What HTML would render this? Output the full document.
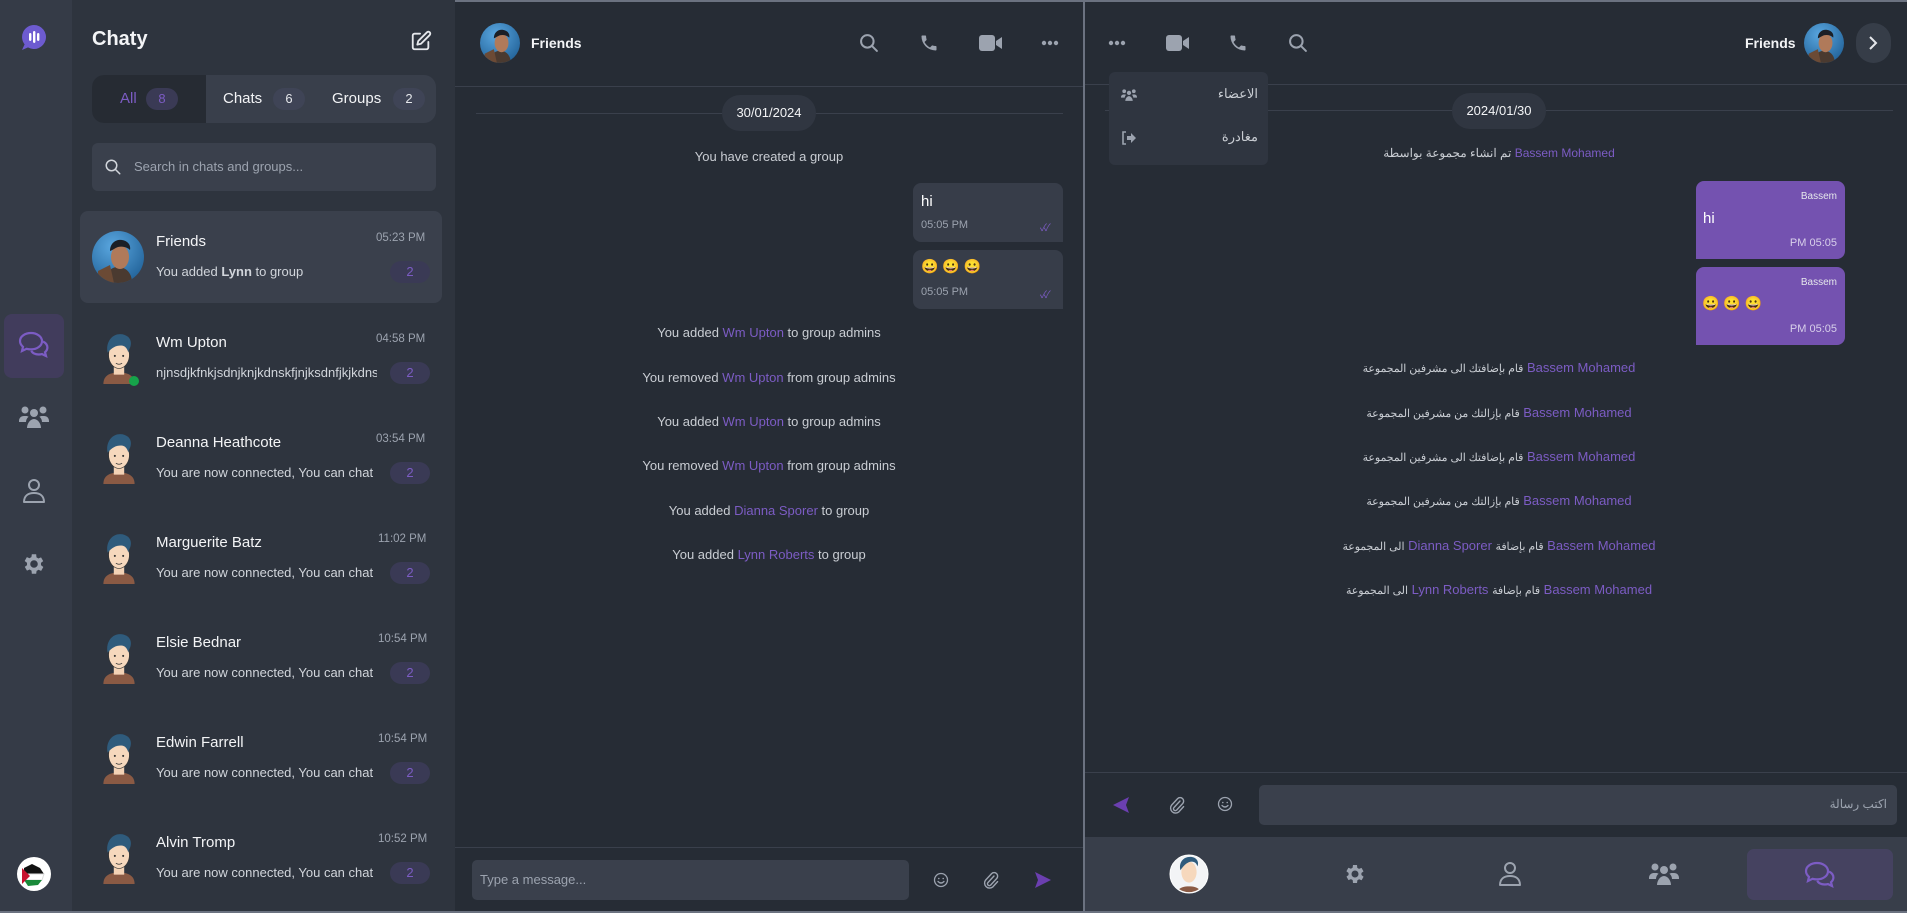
<!DOCTYPE html>
<html><head><meta charset="utf-8"><style>
*{box-sizing:border-box;margin:0;padding:0}
body{width:1907px;height:913px;overflow:hidden;background:#262c35;font-family:"Liberation Sans","Noto Sans CJK SC",sans-serif;color:#e5e7eb;position:relative}
.a{position:absolute}
.rail{left:0;top:0;width:72px;height:913px;background:#353b47}
.list{left:72px;top:0;width:383px;height:913px;background:#2e343e}
.topline{left:0;top:0;width:1907px;height:2px;background:#6b7280}
.ic{fill:none;stroke:#9ca3af;stroke-width:2;stroke-linecap:round;stroke-linejoin:round}
.name{font-size:15px;color:#f3f4f6;white-space:nowrap}
.prev{font-size:13px;color:#d1d5db;white-space:nowrap;overflow:hidden;width:221px}
.time{font-size:11.5px;color:#9ca3af}
.badge{width:40px;height:22px;border-radius:11px;background:#3a3a55;color:#7c5cc4;font-size:13px;text-align:center;line-height:22px}
.sys{font-size:13px;color:#c9cdd3;text-align:center;white-space:nowrap}
.sys span{color:#7c5cc4}
.pill{background:#303641;border-radius:18px;height:36px;line-height:36px;text-align:center;font-size:13px;color:#f3f4f6}
</style></head><body>
<div class="a topline"></div>
<div class="a rail"></div>
<div class="a list"></div>
<div class="a" style="left:1083px;top:0;width:2px;height:913px;background:#6b7280"></div>

<!-- rail -->
<svg class="a" style="left:20px;top:24px" width="28" height="28" viewBox="0 0 28 28"><path d="M14 1a12 12 0 1 1-6 22.4L2 26l2.6-5.6A12 12 0 0 1 14 1z" fill="#6d5bd0"/><rect x="9" y="9" width="2.4" height="8" rx="1.2" fill="#fff"/><rect x="13" y="7" width="2.4" height="12" rx="1.2" fill="#fff"/><rect x="17" y="9" width="2.4" height="8" rx="1.2" fill="#fff"/></svg>
<div class="a" style="left:4px;top:314px;width:60px;height:64px;border-radius:8px;background:#413c5c"></div>
<svg class="a" style="left:18px;top:330px" width="32" height="30" viewBox="0 0 32 30"><path d="M13 3C7 3 2 6.5 2 11c0 2.3 1.2 4.3 3 5.8L4 21l4.6-2.2c1.4.4 2.9.6 4.4.6 6 0 11-3.6 11-8.2S19 3 13 3z" fill="none" stroke="#7c5cc4" stroke-width="2.2"/><path d="M25 11.5c2.6 1.3 4.4 3.5 4.4 6 0 1.8-.9 3.4-2.4 4.7l1 3.8-4-1.9c-1 .3-2.1.4-3.2.4-3.3 0-6.2-1.4-7.6-3.6" fill="none" stroke="#7c5cc4" stroke-width="2.2"/></svg>
<svg class="a" style="left:19px;top:405px" width="30" height="24" viewBox="0 0 30 24"><g fill="#9ca3af"><circle cx="6" cy="5" r="3.5"/><circle cx="24" cy="5" r="3.5"/><circle cx="15" cy="8" r="4"/><path d="M0 16c0-3 2-5 5-5h2c1 0 2 .3 2.6.8C8 13 7 15 7 17H0z"/><path d="M30 16c0-3-2-5-5-5h-2c-1 0-2 .3-2.6.8C22 13 23 15 23 17h7z"/><path d="M8 23c0-4 3-9 7-9s7 5 7 9z"/></g></svg>
<svg class="a" style="left:22px;top:478px" width="24" height="26" viewBox="0 0 24 26"><circle cx="12" cy="7" r="5" class="ic"/><path d="M2 24c0-6 4-9 10-9s10 3 10 9z" class="ic"/></svg>
<svg class="a" style="left:21px;top:551px" width="26" height="26" viewBox="0 0 24 24"><path fill="#9ca3af" d="M19.4 13a7.5 7.5 0 0 0 0-2l2.1-1.6-2-3.5-2.5 1a7 7 0 0 0-1.7-1L15 3h-4l-.4 2.7a7 7 0 0 0-1.7 1l-2.5-1-2 3.5L6.6 11a7.5 7.5 0 0 0 0 2l-2.1 1.6 2 3.5 2.5-1a7 7 0 0 0 1.7 1L11 21h4l.4-2.7a7 7 0 0 0 1.7-1l2.5 1 2-3.5zM13 15.5a3.5 3.5 0 1 1 0-7 3.5 3.5 0 0 1 0 7z" transform="translate(-1 0)"/></svg>
<svg class="a" style="left:16px;top:856px" width="36" height="36" viewBox="0 0 36 36"><circle cx="18" cy="18" r="17" fill="#fff"/><path d="M8 12l8-4 8 4 4 6H8z" fill="#111"/><path d="M8 18h20l-2 6H8z" fill="#fff" stroke="#ddd"/><path d="M8 24h18l-4 5-10 1z" fill="#1a8a3a"/><path d="M6 12l8 8-8 8z" fill="#c8102e"/></svg>

<!-- list header -->
<div class="a" style="left:92px;top:28px;font-size:20px;font-weight:bold;color:#f3f4f6">Chaty</div>
<svg class="a" style="left:410px;top:30px" width="22" height="22" viewBox="0 0 24 24"><path class="ic" style="stroke:#e5e7eb" d="M11 4H5a2 2 0 0 0-2 2v13a2 2 0 0 0 2 2h13a2 2 0 0 0 2-2v-6"/><path style="stroke:#e5e7eb" class="ic" d="M18.5 2.5a2.1 2.1 0 0 1 3 3L12 15l-4 1 1-4z"/></svg>
<div class="a" style="left:92px;top:75px;width:344px;height:48px;border-radius:12px;background:#393f4b;overflow:hidden">
  <div class="a" style="left:0;top:0;width:114px;height:48px;background:#262b33"></div>
  <div class="a" style="left:28px;top:15px;font-size:15px;color:#7c5cc4">All</div>
  <div class="a" style="left:54px;top:13px;width:32px;height:22px;border-radius:11px;background:#3a3a55;color:#7c5cc4;font-size:13px;text-align:center;line-height:22px">8</div>
  <div class="a" style="left:131px;top:15px;font-size:15px;color:#f3f4f6">Chats</div>
  <div class="a" style="left:181px;top:13px;width:32px;height:22px;border-radius:11px;background:#3f4456;color:#e5e7eb;font-size:13px;text-align:center;line-height:22px">6</div>
  <div class="a" style="left:240px;top:15px;font-size:15px;color:#f3f4f6">Groups</div>
  <div class="a" style="left:301px;top:13px;width:32px;height:22px;border-radius:11px;background:#3f4456;color:#e5e7eb;font-size:13px;text-align:center;line-height:22px">2</div>
</div>
<div class="a" style="left:92px;top:143px;width:344px;height:48px;border-radius:6px;background:#3a404c"></div>
<svg class="a" style="left:104px;top:158px" width="18" height="18" viewBox="0 0 24 24"><circle cx="10" cy="10" r="7" class="ic" style="stroke:#d1d5db"/><path d="M15 15l6 6" class="ic" style="stroke:#d1d5db"/></svg>
<div class="a" style="left:134px;top:159px;font-size:13px;color:#9ca3af">Search in chats and groups...</div>

<!-- Friends item -->
<div class="a" style="left:80px;top:211px;width:362px;height:92px;border-radius:8px;background:#3a404c"></div>
<svg class="a" style="left:92px;top:231px" width="52" height="52" viewBox="0 0 52 52"><defs><radialGradient id="g1" cx="0.4" cy="0.3" r="0.8"><stop offset="0" stop-color="#5aa7e0"/><stop offset="1" stop-color="#1f5f95"/></radialGradient><clipPath id="c1"><circle cx="26" cy="26" r="26"/></clipPath></defs><g clip-path="url(#c1)"><rect width="52" height="52" fill="url(#g1)"/><path d="M14 52c0-10 4-16 12-16s14 6 14 16z" fill="#4a3a30"/><ellipse cx="28" cy="26" rx="9" ry="12" fill="#b07a5a"/><path d="M18 20c0-8 6-12 12-11s9 5 8 10c-3-3-8-4-12-3-3 1-5 3-8 4z" fill="#1b1f26"/><path d="M6 40l12-6 4 18H6z" fill="#6b4a35"/></g></svg>
<div class="a name" style="left:156px;top:233px">Friends</div>
<div class="a prev" style="left:156px;top:264px">You added <b>Lynn</b> to group</div>
<div class="a time" style="left:376px;top:232px">05:23 PM</div>
<div class="a badge" style="left:390px;top:261px">2</div>

<!-- other items -->
<div id="items"></div>
<script>
const people=[["Wm Upton","04:58 PM","njnsdjkfnkjsdnjknjkdnskfjnjksdnfjkjkdnsfj",1],["Deanna Heathcote","03:54 PM"],["Marguerite Batz","11:02 PM"],["Elsie Bednar","10:54 PM"],["Edwin Farrell","10:54 PM"],["Alvin Tromp","10:52 PM"]];
let h="";
people.forEach((p,i)=>{const t=312+100*i;
h+=`<svg class="a" style="left:97px;top:${t+20}px" width="44" height="52" viewBox="0 0 42 50"><path d="M6 50c0-8 6-11 15-11s15 3 15 11z" fill="#8a5a44"/><rect x="16" y="32" width="10" height="9" fill="#f3d2b5"/><ellipse cx="21" cy="22" rx="10" ry="13" fill="#f6d8bd" stroke="#333" stroke-width=".6"/><path d="M10 20c-2-10 4-18 12-18 7 0 12 5 10 12-1 3-2 4-2 6-1-4-3-7-7-7-5 0-9 2-13 7z" fill="#2f5b7c"/><circle cx="17" cy="23" r="1" fill="#333"/><circle cx="25" cy="23" r="1" fill="#333"/><path d="M18 30q3 2 6 0" stroke="#333" fill="none" stroke-width=".8"/></svg>`;
if(p[3])h+=`<div class="a" style="left:129px;top:${t+64}px;width:10px;height:10px;border-radius:5px;background:#16a34a"></div>`;
h+=`<div class="a name" style="left:156px;top:${t+22}px">${p[0]}</div>`;
h+=`<div class="a prev" style="left:156px;top:${t+53}px">${p[2]||"You are now connected, You can chat now"}</div>`;
h+=`<div class="a time" style="left:${p[1].startsWith("11")||p[1].startsWith("10")?378:376}px;top:${t+21}px">${p[1]}</div>`;
h+=`<div class="a badge" style="left:390px;top:${t+50}px">2</div>`;});
document.getElementById("items").innerHTML=h;
</script>

<!-- middle chat -->
<svg class="a" style="left:480px;top:23px" width="40" height="40" viewBox="0 0 52 52"><defs><radialGradient id="g2" cx="0.4" cy="0.3" r="0.8"><stop offset="0" stop-color="#5aa7e0"/><stop offset="1" stop-color="#1f5f95"/></radialGradient><clipPath id="c2"><circle cx="26" cy="26" r="26"/></clipPath></defs><g clip-path="url(#c2)"><rect width="52" height="52" fill="url(#g2)"/><path d="M14 52c0-10 4-16 12-16s14 6 14 16z" fill="#4a3a30"/><ellipse cx="28" cy="26" rx="9" ry="12" fill="#b07a5a"/><path d="M18 20c0-8 6-12 12-11s9 5 8 10c-3-3-8-4-12-3-3 1-5 3-8 4z" fill="#1b1f26"/><path d="M6 40l12-6 4 18H6z" fill="#6b4a35"/></g></svg>
<div class="a" style="left:531px;top:35px;font-size:14px;font-weight:bold;color:#f3f4f6">Friends</div>
<svg class="a" style="left:859px;top:33px" width="20" height="20" viewBox="0 0 24 24"><circle cx="10" cy="10" r="7.5" class="ic" style="stroke-width:2.4"/><path d="M15.5 15.5l6 6" class="ic" style="stroke-width:2.4"/></svg>
<svg class="a" style="left:919px;top:33px" width="20" height="20" viewBox="0 0 24 24"><path fill="#9ca3af" d="M6.6 10.8a15 15 0 0 0 6.6 6.6l2.2-2.2c.3-.3.7-.4 1-.2 1.1.4 2.3.6 3.6.6.6 0 1 .4 1 1V20c0 .6-.4 1-1 1A17 17 0 0 1 3 4c0-.6.4-1 1-1h3.5c.6 0 1 .4 1 1 0 1.3.2 2.5.6 3.6.1.3 0 .7-.2 1z"/></svg>
<svg class="a" style="left:979px;top:34px" width="24" height="18" viewBox="0 0 24 18"><rect x="0" y="1" width="16" height="16" rx="3" fill="#9ca3af"/><path d="M17 7l6-4v12l-6-4z" fill="#9ca3af"/></svg>
<svg class="a" style="left:1041px;top:40px" width="18" height="6" viewBox="0 0 18 6"><circle cx="3" cy="3" r="2.2" fill="#9ca3af"/><circle cx="9" cy="3" r="2.2" fill="#9ca3af"/><circle cx="15" cy="3" r="2.2" fill="#9ca3af"/></svg>
<div class="a" style="left:455px;top:86px;width:628px;height:1px;background:#3a404c"></div>
<div class="a" style="left:476px;top:113px;width:587px;height:1px;background:#3a404c"></div>
<div class="a pill" style="left:722px;top:95px;width:94px">30/01/2024</div>
<div class="a sys" style="left:455px;width:628px;top:149px">You have created a group</div>
<div class="a" style="left:913px;top:183px;width:150px;height:59px;border-radius:8px 8px 0 8px;background:#373d49"></div>
<div class="a" style="left:921px;top:193px;font-size:15px;color:#fff">hi</div>
<div class="a" style="left:921px;top:219px;font-size:11px;color:#9ca3af">05:05 PM</div>
<div class="a" style="left:913px;top:250px;width:150px;height:59px;border-radius:8px 8px 0 8px;background:#373d49"></div>
<div class="a" style="left:921px;top:258px;font-size:14px">😀 😀 😀</div>
<div class="a" style="left:921px;top:286px;font-size:11px;color:#9ca3af">05:05 PM</div>
<div class="a" style="left:1040px;top:219px;font-size:10px;color:#7c5cc4;letter-spacing:-3px">✓✓</div>
<div class="a" style="left:1040px;top:286px;font-size:10px;color:#7c5cc4;letter-spacing:-3px">✓✓</div>
<div class="a sys" style="left:455px;width:628px;top:325px">You added <span>Wm Upton</span> to group admins</div>
<div class="a sys" style="left:455px;width:628px;top:370px">You removed <span>Wm Upton</span> from group admins</div>
<div class="a sys" style="left:455px;width:628px;top:414px">You added <span>Wm Upton</span> to group admins</div>
<div class="a sys" style="left:455px;width:628px;top:458px">You removed <span>Wm Upton</span> from group admins</div>
<div class="a sys" style="left:455px;width:628px;top:503px">You added <span>Dianna Sporer</span> to group</div>
<div class="a sys" style="left:455px;width:628px;top:547px">You added <span>Lynn Roberts</span> to group</div>
<div class="a" style="left:455px;top:847px;width:628px;height:1px;background:#3a404c"></div>
<div class="a" style="left:472px;top:860px;width:437px;height:40px;border-radius:5px;background:#3a404c"></div>
<div class="a" style="left:480px;top:872px;font-size:13px;color:#9ca3af">Type a message...</div>
<svg class="a" style="left:933px;top:872px" width="16" height="16" viewBox="0 0 16 16"><circle cx="8" cy="8" r="6.5" class="ic" style="stroke-width:1.3"/><circle cx="5.8" cy="6.5" r=".8" fill="#9ca3af"/><circle cx="10.2" cy="6.5" r=".8" fill="#9ca3af"/><path d="M5 9.5q3 3 6 0" class="ic" style="stroke-width:1.3"/></svg>
<svg class="a" style="left:983px;top:871px" width="16" height="18" viewBox="0 0 16 18"><path d="M11 5l-6 6.5a1.8 1.8 0 0 0 2.6 2.6l6-6.5a3.5 3.5 0 0 0-5-5l-6 6.5a5 5 0 0 0 7 7l5-5.5" class="ic" style="stroke-width:1.4"/></svg>
<svg class="a" style="left:1034px;top:871px" width="18" height="18" viewBox="0 0 18 18"><path d="M1 1l16 8-16 8 3-8z" fill="#6b3fb0"/></svg>

<!-- right panel -->
<svg class="a" style="left:1108px;top:40px" width="18" height="6" viewBox="0 0 18 6"><circle cx="3" cy="3" r="2.2" fill="#9ca3af"/><circle cx="9" cy="3" r="2.2" fill="#9ca3af"/><circle cx="15" cy="3" r="2.2" fill="#9ca3af"/></svg>
<svg class="a" style="left:1166px;top:34px" width="24" height="18" viewBox="0 0 24 18"><rect x="0" y="1" width="16" height="16" rx="3" fill="#9ca3af"/><path d="M17 7l6-4v12l-6-4z" fill="#9ca3af"/></svg>
<svg class="a" style="left:1228px;top:33px" width="20" height="20" viewBox="0 0 24 24"><path fill="#9ca3af" d="M6.6 10.8a15 15 0 0 0 6.6 6.6l2.2-2.2c.3-.3.7-.4 1-.2 1.1.4 2.3.6 3.6.6.6 0 1 .4 1 1V20c0 .6-.4 1-1 1A17 17 0 0 1 3 4c0-.6.4-1 1-1h3.5c.6 0 1 .4 1 1 0 1.3.2 2.5.6 3.6.1.3 0 .7-.2 1z"/></svg>
<svg class="a" style="left:1288px;top:33px" width="20" height="20" viewBox="0 0 24 24"><circle cx="10" cy="10" r="7.5" class="ic" style="stroke-width:2.4"/><path d="M15.5 15.5l6 6" class="ic" style="stroke-width:2.4"/></svg>
<div class="a" style="left:1745px;top:35px;font-size:14px;font-weight:bold;color:#f3f4f6">Friends</div>
<svg class="a" style="left:1804px;top:23px" width="40" height="40" viewBox="0 0 52 52"><defs><clipPath id="c3"><circle cx="26" cy="26" r="26"/></clipPath></defs><g clip-path="url(#c3)"><rect width="52" height="52" fill="url(#g2)"/><path d="M14 52c0-10 4-16 12-16s14 6 14 16z" fill="#4a3a30"/><ellipse cx="28" cy="26" rx="9" ry="12" fill="#b07a5a"/><path d="M18 20c0-8 6-12 12-11s9 5 8 10c-3-3-8-4-12-3-3 1-5 3-8 4z" fill="#1b1f26"/><path d="M6 40l12-6 4 18H6z" fill="#6b4a35"/></g></svg>
<div class="a" style="left:1856px;top:23px;width:35px;height:40px;border-radius:20px;background:#363d48"></div>
<svg class="a" style="left:1867px;top:35px" width="12" height="16" viewBox="0 0 12 16"><path d="M3 2l6 6-6 6" fill="none" stroke="#e5e7eb" stroke-width="2"/></svg>
<div class="a" style="left:1085px;top:84px;width:822px;height:1px;background:#3a404c"></div>
<div class="a" style="left:1105px;top:110px;width:788px;height:1px;background:#3a404c"></div>
<div class="a pill" style="left:1452px;top:93px;width:94px">2024/01/30</div>
<div class="a" style="left:1109px;top:72px;width:159px;height:93px;border-radius:6px;background:#2f3540"></div>
<svg class="a" style="left:1121px;top:88px" width="16" height="14" viewBox="0 0 30 24"><g fill="#9ca3af"><circle cx="6" cy="5" r="3.5"/><circle cx="24" cy="5" r="3.5"/><circle cx="15" cy="8" r="4"/><path d="M0 16c0-3 2-5 5-5h2c1 0 2 .3 2.6.8C8 13 7 15 7 17H0z"/><path d="M30 16c0-3-2-5-5-5h-2c-1 0-2 .3-2.6.8C22 13 23 15 23 17h7z"/><path d="M8 23c0-4 3-9 7-9s7 5 7 9z"/></g></svg>
<div class="a" style="left:1180px;top:86px;width:78px;text-align:right;font-size:13px;color:#c9cdd3">الاعضاء</div>
<svg class="a" style="left:1121px;top:131px" width="16" height="14" viewBox="0 0 16 14"><path d="M5 1H2v12h3" fill="none" stroke="#9ca3af" stroke-width="1.6"/><path d="M6 5h4V2l5 5-5 5V9H6z" fill="#9ca3af"/></svg>
<div class="a" style="left:1180px;top:129px;width:78px;text-align:right;font-size:13px;color:#c9cdd3">مغادرة</div>
<div class="a sys" dir="rtl" style="left:1085px;width:828px;top:146px;font-size:12px"><span>Bassem Mohamed</span> تم انشاء مجموعة بواسطة</div>
<div class="a" style="left:1696px;top:181px;width:149px;height:78px;border-radius:8px 8px 8px 0;background:#7452b0"></div>
<div class="a" style="left:1780px;top:191px;width:57px;text-align:right;font-size:10px;color:#e5e7eb">Bassem</div>
<div class="a" style="left:1703px;top:210px;font-size:15px;color:#fff">hi</div>
<div class="a" style="left:1760px;top:237px;width:77px;text-align:right;font-size:11px;color:#d8d0ea">PM 05:05</div>
<div class="a" style="left:1696px;top:267px;width:149px;height:78px;border-radius:8px 8px 8px 0;background:#7452b0"></div>
<div class="a" style="left:1780px;top:277px;width:57px;text-align:right;font-size:10px;color:#e5e7eb">Bassem</div>
<div class="a" style="left:1702px;top:295px;font-size:14px">😀 😀 😀</div>
<div class="a" style="left:1760px;top:323px;width:77px;text-align:right;font-size:11px;color:#d8d0ea">PM 05:05</div>
<div class="a sys" dir="rtl" style="left:1085px;width:828px;top:360px"><span>Bassem Mohamed</span> <small>قام بإضافتك الى مشرفين المجموعة</small></div>
<div class="a sys" dir="rtl" style="left:1085px;width:828px;top:405px"><span>Bassem Mohamed</span> <small>قام بإزالتك من مشرفين المجموعة</small></div>
<div class="a sys" dir="rtl" style="left:1085px;width:828px;top:449px"><span>Bassem Mohamed</span> <small>قام بإضافتك الى مشرفين المجموعة</small></div>
<div class="a sys" dir="rtl" style="left:1085px;width:828px;top:493px"><span>Bassem Mohamed</span> <small>قام بإزالتك من مشرفين المجموعة</small></div>
<div class="a sys" dir="rtl" style="left:1085px;width:828px;top:538px"><span>Bassem Mohamed</span> <small>قام بإضافة</small> <span>Dianna Sporer</span> <small>الى المجموعة</small></div>
<div class="a sys" dir="rtl" style="left:1085px;width:828px;top:582px"><span>Bassem Mohamed</span> <small>قام بإضافة</small> <span>Lynn Roberts</span> <small>الى المجموعة</small></div>

<div class="a" style="left:1085px;top:772px;width:822px;height:1px;background:#3a404c"></div>
<div class="a" style="left:1259px;top:785px;width:638px;height:40px;border-radius:5px;background:#3a404c"></div>
<div class="a" dir="rtl" style="left:1700px;top:797px;width:187px;text-align:right;font-size:12px;color:#9ca3af">اكتب رسالة</div>
<svg class="a" style="left:1217px;top:796px" width="16" height="16" viewBox="0 0 16 16"><circle cx="8" cy="8" r="6.5" class="ic" style="stroke-width:1.3"/><circle cx="5.8" cy="6.5" r=".8" fill="#9ca3af"/><circle cx="10.2" cy="6.5" r=".8" fill="#9ca3af"/><path d="M5 9.5q3 3 6 0" class="ic" style="stroke-width:1.3"/></svg>
<svg class="a" style="left:1169px;top:796px" width="16" height="18" viewBox="0 0 16 18"><path d="M11 5l-6 6.5a1.8 1.8 0 0 0 2.6 2.6l6-6.5a3.5 3.5 0 0 0-5-5l-6 6.5a5 5 0 0 0 7 7l5-5.5" class="ic" style="stroke-width:1.4"/></svg>
<svg class="a" style="left:1112px;top:796px" width="18" height="18" viewBox="0 0 18 18"><path d="M17 1L1 9l16 8-3-8z" fill="#6b3fb0"/></svg>

<div class="a" style="left:1085px;top:837px;width:822px;height:76px;background:#383e4a"></div>
<div class="a" style="left:1747px;top:849px;width:146px;height:51px;border-radius:7px;background:#454260"></div>
<svg class="a" style="left:1169px;top:854px" width="40" height="40" viewBox="0 0 42 42"><circle cx="21" cy="21" r="20" fill="#f3f4f6" stroke="#fff"/><clipPath id="c4"><circle cx="21" cy="21" r="19"/></clipPath><g clip-path="url(#c4)"><path d="M8 44c0-8 6-10 13-10s13 2 13 10z" fill="#8a5a44"/><ellipse cx="21" cy="19" rx="8" ry="11" fill="#f6d8bd"/><path d="M12 17c-2-8 3-14 10-14 6 0 10 4 8 10-1-3-3-5-6-5-4 0-8 3-12 9z" fill="#2f5b7c"/></g></svg>
<svg class="a" style="left:1343px;top:862px" width="24" height="24" viewBox="0 0 24 24"><path fill="#9ca3af" d="M19.4 13a7.5 7.5 0 0 0 0-2l2.1-1.6-2-3.5-2.5 1a7 7 0 0 0-1.7-1L15 3h-4l-.4 2.7a7 7 0 0 0-1.7 1l-2.5-1-2 3.5L6.6 11a7.5 7.5 0 0 0 0 2l-2.1 1.6 2 3.5 2.5-1a7 7 0 0 0 1.7 1L11 21h4l.4-2.7a7 7 0 0 0 1.7-1l2.5 1 2-3.5zM13 15.5a3.5 3.5 0 1 1 0-7 3.5 3.5 0 0 1 0 7z" transform="translate(-1 0)"/></svg>
<svg class="a" style="left:1498px;top:861px" width="24" height="26" viewBox="0 0 24 26"><circle cx="12" cy="7" r="5" class="ic"/><path d="M2 24c0-6 4-9 10-9s10 3 10 9z" class="ic"/></svg>
<svg class="a" style="left:1649px;top:862px" width="30" height="24" viewBox="0 0 30 24"><g fill="#9ca3af"><circle cx="6" cy="5" r="3.5"/><circle cx="24" cy="5" r="3.5"/><circle cx="15" cy="8" r="4"/><path d="M0 16c0-3 2-5 5-5h2c1 0 2 .3 2.6.8C8 13 7 15 7 17H0z"/><path d="M30 16c0-3-2-5-5-5h-2c-1 0-2 .3-2.6.8C22 13 23 15 23 17h7z"/><path d="M8 23c0-4 3-9 7-9s7 5 7 9z"/></g></svg>
<svg class="a" style="left:1804px;top:860px" width="32" height="30" viewBox="0 0 32 30"><path d="M13 3C7 3 2 6.5 2 11c0 2.3 1.2 4.3 3 5.8L4 21l4.6-2.2c1.4.4 2.9.6 4.4.6 6 0 11-3.6 11-8.2S19 3 13 3z" fill="none" stroke="#7c5cc4" stroke-width="2.2"/><path d="M25 11.5c2.6 1.3 4.4 3.5 4.4 6 0 1.8-.9 3.4-2.4 4.7l1 3.8-4-1.9c-1 .3-2.1.4-3.2.4-3.3 0-6.2-1.4-7.6-3.6" fill="none" stroke="#7c5cc4" stroke-width="2.2"/></svg>
<div class="a" style="left:0;top:911px;width:1907px;height:2px;background:#6b7280"></div>
</body></html>
